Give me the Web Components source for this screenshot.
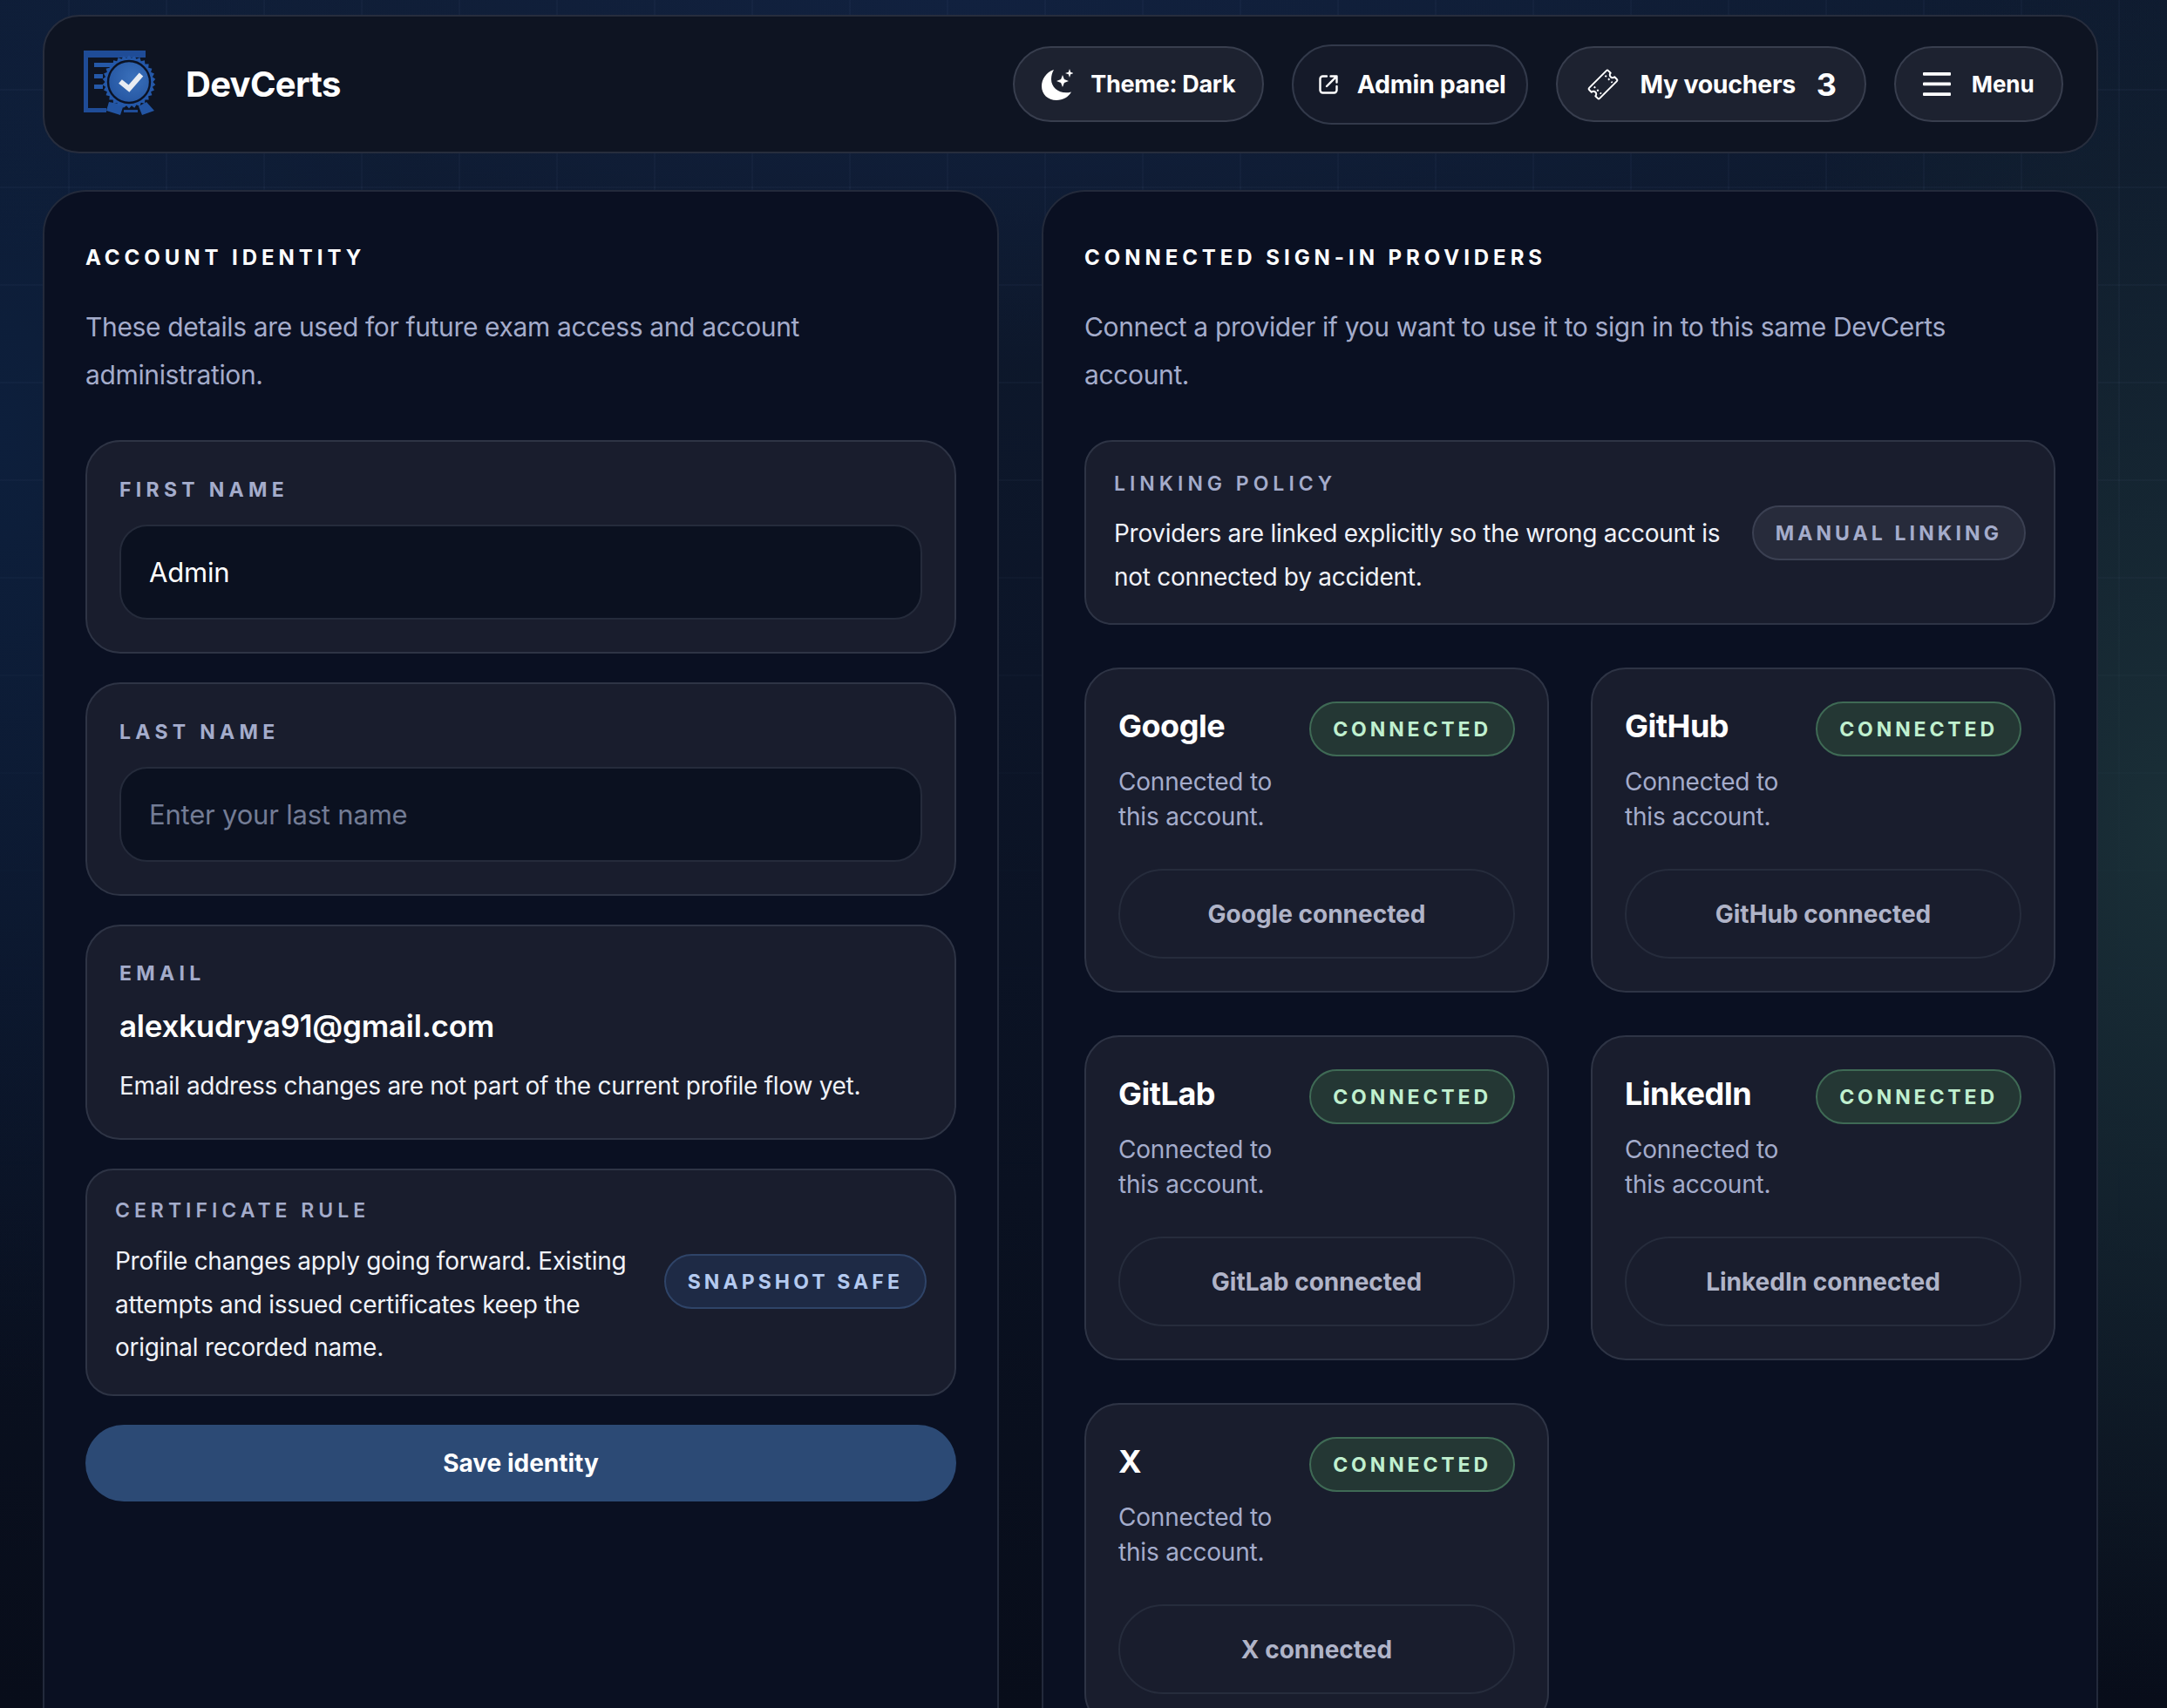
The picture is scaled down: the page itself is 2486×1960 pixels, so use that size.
<!DOCTYPE html>
<html lang="en"><head><meta charset="utf-8"><title>DevCerts</title>
<style>
html,body{margin:0;height:1960px;overflow:hidden;background:#0a1024}
body{font-family:Inter,"Liberation Sans",sans-serif;color:#fff}
</style></head><body>
<dc-app>
  <dc-header slot="header"></dc-header>
  <dc-panel slot="left" heading="ACCOUNT IDENTITY" intro="These details are used for future exam access and account administration.">
    <dc-field label="FIRST NAME" value="Admin"></dc-field>
    <dc-field label="LAST NAME" placeholder="Enter your last name"></dc-field>
    <dc-email label="EMAIL" value="alexkudrya91@gmail.com" help="Email address changes are not part of the current profile flow yet."></dc-email>
    <dc-note label="CERTIFICATE RULE" chip="SNAPSHOT SAFE" tone="blue">Profile changes apply going forward. Existing attempts and issued certificates keep the original recorded name.</dc-note>
    <dc-save>Save identity</dc-save>
  </dc-panel>
  <dc-panel slot="right" heading="CONNECTED SIGN-IN PROVIDERS" intro="Connect a provider if you want to use it to sign in to this same DevCerts account.">
    <dc-note label="LINKING POLICY" chip="MANUAL LINKING" tone="grey" wide>Providers are linked explicitly so the wrong account is not connected by accident.</dc-note>
    <dc-provider-grid>
      <dc-provider name="Google"></dc-provider>
      <dc-provider name="GitHub"></dc-provider>
      <dc-provider name="GitLab"></dc-provider>
      <dc-provider name="LinkedIn"></dc-provider>
      <dc-provider name="X"></dc-provider>
    </dc-provider-grid>
  </dc-panel>
</dc-app>
<script>
function def(name, render){
  customElements.define(name, class extends HTMLElement{
    constructor(){super();this.attachShadow({mode:'open'});}
    connectedCallback(){this.shadowRoot.innerHTML=render(this);}
  });
}
const attr=(e,n)=>e.getAttribute(n)||'';
def('dc-app',()=>`<style>
:host{display:block;position:relative;isolation:isolate;box-sizing:border-box;width:2486px;height:1960px;overflow:hidden;padding:17px 78px 0 49px;
background:
 radial-gradient(620px 1000px at 2486px 950px,#1a2f37 0%,rgba(26,47,55,.55) 45%,rgba(26,47,55,0) 100%),
 radial-gradient(1500px 420px at 1100px 0,#11213f 0%,rgba(17,33,63,0) 100%),
 radial-gradient(500px 1100px at 0 500px,#0d1f3c 0%,rgba(13,31,60,0) 100%),
 linear-gradient(to bottom,#0e1a2e 0%,#0c1528 40%,#080d1a 100%)}
:host::before{content:"";position:absolute;inset:0;z-index:-1;pointer-events:none;
background:
 linear-gradient(to right,rgba(140,170,220,.04) 2px,transparent 2px) 78px 0/112px 112px,
 linear-gradient(to bottom,rgba(140,170,220,.04) 2px,transparent 2px) 0 102px/112px 112px;
-webkit-mask-image:linear-gradient(to bottom,#000 0,#000 500px,rgba(0,0,0,.25) 1000px,transparent 1500px);
mask-image:linear-gradient(to bottom,#000 0,#000 500px,rgba(0,0,0,.25) 1000px,transparent 1500px)}
.grid{display:grid;grid-template-columns:1097px 1212px;column-gap:49px;margin-top:42px;align-items:stretch}
</style><slot name="header"></slot><div class="grid"><slot name="left"></slot><slot name="right"></slot></div>`);
def('dc-logo',()=>{
  let pts=[];const cx=52,cy=36,n=30;
  for(let i=0;i<n*2;i++){const r=i%2?30.5:27.5,a=i*Math.PI/n;pts.push((cx+r*Math.cos(a)).toFixed(1)+','+(cy+r*Math.sin(a)).toFixed(1));}
  return `<style>:host{display:block;width:84px;height:78px;margin-left:5px;flex:none}svg{display:block}</style>
  <svg width="84" height="78" viewBox="0 0 84 78" role="img" aria-label="DevCerts logo">
  <defs><radialGradient id="g" cx=".6" cy=".4" r=".8"><stop offset="0" stop-color="#3a70bb"/><stop offset="1" stop-color="#20509c"/></radialGradient></defs>
  <path d="M0 0H71V8H5V66H26V71H0Z" fill="#1f4c97"/>
  <rect x="12" y="14" width="22" height="5" fill="#2558a8"/><rect x="12" y="27" width="10" height="5" fill="#2558a8"/><rect x="12" y="39" width="10" height="5" fill="#2558a8"/>
  <path d="M46 68H62V71H46Z" fill="#1f4c97"/>
  <polygon points="29,59 26,69 42,74 46,62" fill="#2355a3"/>
  <polygon points="72,59 81,69 67,74 63,64" fill="#2355a3"/>
  <polygon points="${pts.join(' ')}" fill="#2458a9"/>
  <circle cx="52" cy="36" r="24" fill="url(#g)" stroke="#0b1224" stroke-width="2.4"/>
  <path d="M42 35.500 52 43.500 66 27.500" fill="none" stroke="#e8ecf2" stroke-width="6"/>
  </svg>`;});
def('dc-pill',e=>{const h=attr(e,'h')||87,t=attr(e,'tone');return `<style>
:host{display:inline-flex;box-sizing:border-box;height:${h}px;align-items:center;border-radius:999px;border:2px solid ${t=='flat'?'#32394a':'#383e4e'};background:${t=='flat'?'#151a29':'#1d2230'};padding:${attr(e,'pad')};gap:${attr(e,'gap')}px;font-weight:700;font-size:${attr(e,'fs')}px;color:#fff;white-space:nowrap;letter-spacing:${attr(e,'ls')||'-.3'}px}
</style><slot></slot>`;});
def('dc-header',()=>`<style>
:host{display:flex;box-sizing:border-box;width:2358px;height:159px;align-items:center;padding:0 38.500px 0 40px;border:2px solid #272d3d;border-radius:42px;background:#0e1422}
.brand{font-size:40px;font-weight:700;letter-spacing:-.7px;margin-left:33px;margin-right:auto}
.n{font-size:36px;font-weight:700}
.nav{display:flex;gap:32px;align-items:center}
svg{display:block;flex:none}
</style>
<dc-logo></dc-logo><div class="brand">DevCerts</div>
<div class="nav">
<dc-pill pad="0 31px" gap="20" fs="27">
  <svg width="36" height="36" viewBox="0 0 36 36"><path fill="#fff" d="M14 1C5 4 0 12 0 20c0 9 7 16 17 16 7.500 0 13.500-3.500 17-9.500-12 3.500-23-4-23-14.500 0-4 1-8 3-11Z"/><path fill="#fff" d="M24 7l1.900 5.100L31 14l-5.100 1.900L24 21l-1.900-5.100L17 14l5.100-1.900zM32 0l1.200 3.800L37 5l-3.800 1.200L32 10l-1.200-3.800L27 5l3.800-1.200z"/></svg>
  <span>Theme: Dark</span></dc-pill>
<dc-pill tone="flat" h="92" pad="0 23px 0 27.500px" gap="21" fs="28.500">
  <svg width="24" height="24" viewBox="0 0 24 24" fill="none" stroke="#fff" stroke-width="2.400" stroke-linecap="round" stroke-linejoin="round"><path d="M10 2.500H5.500a3 3 0 0 0-3 3v13a3 3 0 0 0 3 3h13a3 3 0 0 0 3-3V14"/><path d="M10 14 21 3M14.500 2.500h7v7"/></svg>
  <span>Admin panel</span></dc-pill>
<dc-pill pad="0 32px 0 33px" gap="24" fs="28.500">
  <svg width="38" height="38" viewBox="0 0 38 38" fill="none" stroke="#fff" stroke-width="2" stroke-linejoin="round"><g transform="rotate(-45 19 19)"><path d="M5 10.500H33a1.500 1.500 0 0 1 1.500 1.500V15.800a3.200 3.200 0 0 0 0 6.400V26a1.500 1.500 0 0 1-1.500 1.500H5A1.500 1.500 0 0 1 3.500 26V22.200a3.200 3.200 0 0 0 0-6.400V12A1.500 1.500 0 0 1 5 10.500Z"/><path d="M10 13.500V25M28 13.500V25" stroke-dasharray="2 3"/></g></svg>
  <span>My vouchers</span><span class="n">3</span></dc-pill>
<dc-pill pad="0 31px 0 31px" gap="24" fs="26" ls="-.1">
  <svg width="32" height="27" viewBox="0 0 32 27" fill="#fff"><rect y="0" width="32" height="3.800" rx="1"/><rect y="11.500" width="32" height="3.800" rx="1"/><rect y="23.200" width="32" height="3.800" rx="1"/></svg>
  <span>Menu</span></dc-pill>
</div>`);
def('dc-panel',e=>`<style>
:host{display:block;box-sizing:border-box;border:2px solid #232a3b;border-radius:50px;background:#0a1022;padding:62px 47px 48px;min-height:1740px}
h2{margin:0;font-size:24px;line-height:28px;font-weight:700;letter-spacing:4.950px;color:#fff}
p{margin:38px 0 47px;max-width:1090px;font-size:30px;line-height:55px;color:#a4accb;letter-spacing:-.36px}
.stack{display:flex;flex-direction:column;gap:33px}
</style><h2>${attr(e,'heading')}</h2><p>${attr(e,'intro')}</p><div class="stack"><slot></slot></div>`);
const label=`font-size:23px;line-height:28px;font-weight:600;letter-spacing:5px;color:#a4accb;`;
const card=`display:block;box-sizing:border-box;background:#191d2d;border:2px solid #2e3445;`;
def('dc-field',e=>{const v=attr(e,'value');return `<style>
:host{${card}height:245px;border-radius:40px;padding:41px 37px 0}
.l{${label}font-weight:700;letter-spacing:5.300px}
.i{box-sizing:border-box;height:109px;margin-top:26px;border:2px solid #252b3b;border-radius:32px;background:#0b1120;padding:0 32px;display:flex;align-items:center;font-size:31px;letter-spacing:-.2px;color:${v?'#fff':'#737c95'}}
</style><div class="l">${attr(e,'label')}</div><div class="i" role="textbox">${v||attr(e,'placeholder')}</div>`;});
def('dc-email',e=>`<style>
:host{${card}height:247px;border-radius:40px;padding:40px 37px 0}
.l{${label}font-weight:700;letter-spacing:5.300px}
.v{font-size:35px;line-height:46px;font-weight:600;margin-top:23px;letter-spacing:-.25px}
.h{font-size:28px;line-height:44px;margin-top:24px;color:#f0f2f8;letter-spacing:-.27px}
</style><div class="l">${attr(e,'label')}</div><div class="v">${attr(e,'value')}</div><div class="h">${attr(e,'help')}</div>`);
def('dc-chip',e=>{const t=attr(e,'tone');const c={blue:['#1e2a45','#2f4468','#b4caf0'],grey:['#272b3b','#3b4052','#a4accb'],green:['#243734','#3f6a55','#c0f0cf']}[t];return `<style>
:host{display:inline-flex;box-sizing:border-box;height:63px;align-items:center;padding:0 25px;border-radius:999px;background:${c[0]};border:2px solid ${c[1]};color:${c[2]};font-size:23px;font-weight:700;letter-spacing:${t=='green'?3.9:4.100}px;white-space:nowrap;flex:none}
</style><slot></slot>`;});
def('dc-note',e=>`<style>
:host{${card}border-radius:32px;padding:${e.hasAttribute('wide')?'34px':'32px'} 32px 28px;display:flex;align-items:center;gap:30px}
.m{flex:1;min-width:0}
.l{${label}}
.t{font-size:28px;line-height:49.500px;color:#f0f2f8;margin-top:${e.hasAttribute('wide')?'19px':'20px'};letter-spacing:-.28px}
dc-chip{margin-top:-5px}
</style><div class="m"><div class="l">${attr(e,'label')}</div><div class="t"><slot></slot></div></div><dc-chip tone="${attr(e,'tone')}">${attr(e,'chip')}</dc-chip>`);
def('dc-save',()=>`<style>
:host{display:flex;height:88px;align-items:center;justify-content:center;border-radius:999px;background:#2c4a75;font-size:28px;font-weight:700;color:#fff}
</style><slot></slot>`);
def('dc-provider-grid',()=>`<style>
:host{display:grid;grid-template-columns:1fr 1fr;gap:49px 48px;margin-top:16px}
</style><slot></slot>`);
def('dc-provider',e=>`<style>
:host{${card}height:373px;border-radius:40px;padding:37px 37px 0}
.top{display:flex;justify-content:space-between;align-items:flex-start}
.n{font-size:36px;line-height:50px;font-weight:700;letter-spacing:-.5px;margin-top:3px}
.d{font-size:28px;line-height:40px;color:#a4accb;margin-top:-2px;padding-top:11px;width:220px;letter-spacing:-.2px}
.b{display:flex;box-sizing:border-box;height:103px;margin-top:40px;align-items:center;justify-content:center;border:2px solid #262c3c;border-radius:999px;color:#b0b4c8;font-size:28px;font-weight:700}
</style><div class="top"><div class="n">${attr(e,'name')}</div><dc-chip tone="green">CONNECTED</dc-chip></div>
<div class="d">Connected to this account.</div><div class="b">${attr(e,'name')} connected</div>`);
</script></body></html>
